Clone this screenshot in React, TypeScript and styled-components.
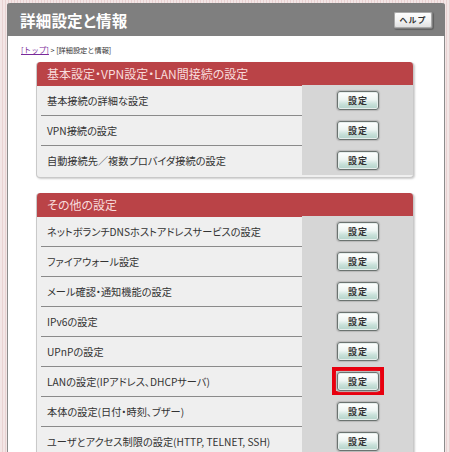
import React from "react";
import styled, { createGlobalStyle } from "styled-components";

const Global = createGlobalStyle`
  html, body { margin: 0; padding: 0; }
  *, *::before, *::after { box-sizing: border-box; }
  body {
    background-color: #f1e1e1;
    background-image: repeating-linear-gradient(90deg, #f3e6e6 0px, #f3e6e6 2px, #e9d2d2 2px, #e9d2d2 3px);
    font-family: "Noto Sans CJK JP", "DejaVu Sans", sans-serif;
    color: #333;
  }
`;

const Page = styled.div`
  padding: 3px 5px 0 7px;
  height: 452px;
  overflow: hidden;
`;

const Panel = styled.div`
  background: #fff;
  border: 1px solid #8c8c8c;
  border-top: none;
  border-radius: 3px 3px 0 0;
  min-height: 460px;
`;

const Header = styled.div`
  height: 33px;
  background: #7f7f7f;
  border-radius: 3px 3px 0 0;
  display: flex;
  align-items: center;
  justify-content: space-between;
  padding: 0 12px 0 13px;
  margin: 0 -1px;
`;

const Title = styled.h1`
  margin: 0;
  font-size: 15.5px;
  font-weight: bold;
  color: #fff;
  letter-spacing: 0.2px;
  font-feature-settings: "palt";
`;

const HelpButton = styled.button`
  width: 40px;
  height: 18px;
  padding: 0;
  border: 1px solid #7d7d7d;
  border-radius: 3px;
  background: linear-gradient(#ffffff, #f4f4f4 50%, #dedede);
  box-shadow: 0 0 0 1px #a9a9a9 inset, 1px 1px 1px rgba(0, 0, 0, 0.25);
  font-family: inherit;
  font-size: 8px;
  font-weight: bold;
  color: #333;
  line-height: 16px;
  letter-spacing: 1px;
`;

const Crumbs = styled.div`
  font-size: 7.2px;
  line-height: 12px;
  padding: 8px 0 0 13px;
  height: 26px;
  color: #333;
`;

const CrumbLink = styled.a`
  color: #7a2a9a;
  text-decoration: underline;
  font-size: 7.6px;
`;

const Content = styled.div`
  padding-left: 28px;
  display: flex;
  flex-direction: column;
  gap: 15px;
`;

const Box = styled.section`
  width: 378px;
  background: #efefef;
  border: 1px solid #c9c9c9;
  border-top: none;
  border-radius: 4px;
  box-shadow: 1px 1px 2px rgba(0, 0, 0, 0.2);
  padding-bottom: 2px;
  overflow: hidden;
`;

const BoxHeader = styled.h2`
  margin: 0 -1px;
  height: 24px;
  background: #ba4347;
  color: #f8dcdc;
  font-size: 12px;
  font-weight: normal;
  line-height: 24px;
  padding-left: 11px;
  border-radius: 4px 4px 0 0;
  font-feature-settings: "palt";
`;

const Rows = styled.div`
  padding-left: 4px;
  display: flex;
  flex-direction: column;
`;

const Row = styled.div`
  display: grid;
  grid-template-columns: 261px 1fr;
  height: 30px;
  border-top: 1px solid #8a8a8a;
  &:first-child {
    border-top: none;
    height: 29px;
  }
`;

const Label = styled.div`
  display: flex;
  align-items: center;
  padding-left: 6px;
  font-size: 10.2px;
  color: #333;
  font-feature-settings: "palt";
  white-space: nowrap;
`;

const Action = styled.div`
  background: #d6d6d6;
  display: flex;
  align-items: center;
  justify-content: center;
  margin-top: -1px;
  margin-right: -1px;
`;

const Highlight = styled.div<{ $on: boolean }>`
  display: flex;
  align-items: center;
  justify-content: center;
  width: 52px;
  height: 28px;
  border: 4px solid ${(p) => (p.$on ? "#e8000f" : "transparent")};
`;

const SetButton = styled.button`
  width: 42px;
  height: 19px;
  padding: 0;
  border: 1px solid #6b7370;
  border-radius: 3px;
  background: linear-gradient(#ffffff, #eef5f3 45%, #c9e1da 70%, #b3d2c9);
  box-shadow: 0 0 0 1px #e6eeec inset, 0 0 1px 1px #b8b8b8;
  font-family: inherit;
  font-size: 9px;
  font-weight: bold;
  color: #333;
  line-height: 17px;
  letter-spacing: 1px;
`;

type Item = { label: string; highlight?: boolean };

const sections: { title: string; items: Item[] }[] = [
  {
    title: "基本設定・VPN設定・LAN間接続の設定",
    items: [
      { label: "基本接続の詳細な設定" },
      { label: "VPN接続の設定" },
      { label: "自動接続先／複数プロバイダ接続の設定" },
    ],
  },
  {
    title: "その他の設定",
    items: [
      { label: "ネットボランチDNSホストアドレスサービスの設定" },
      { label: "ファイアウォール設定" },
      { label: "メール確認・通知機能の設定" },
      { label: "IPv6の設定" },
      { label: "UPnPの設定" },
      { label: "LANの設定(IPアドレス、DHCPサーバ)", highlight: true },
      { label: "本体の設定(日付・時刻、ブザー)" },
      { label: "ユーザとアクセス制限の設定(HTTP, TELNET, SSH)" },
    ],
  },
];

export default function App() {
  return (
    <>
      <Global />
      <Page>
        <Panel>
          <Header>
            <Title>詳細設定と情報</Title>
            <HelpButton>ヘルプ</HelpButton>
          </Header>
          <Crumbs>
            <CrumbLink href="#">[トップ]</CrumbLink> &gt; [詳細設定と情報]
          </Crumbs>
          <Content>
            {sections.map((s) => (
              <Box key={s.title}>
                <BoxHeader>{s.title}</BoxHeader>
                <Rows>
                  {s.items.map((it) => (
                    <Row key={it.label}>
                      <Label>{it.label}</Label>
                      <Action>
                        <Highlight $on={!!it.highlight}>
                          <SetButton>設定</SetButton>
                        </Highlight>
                      </Action>
                    </Row>
                  ))}
                </Rows>
              </Box>
            ))}
          </Content>
        </Panel>
      </Page>
    </>
  );
}
